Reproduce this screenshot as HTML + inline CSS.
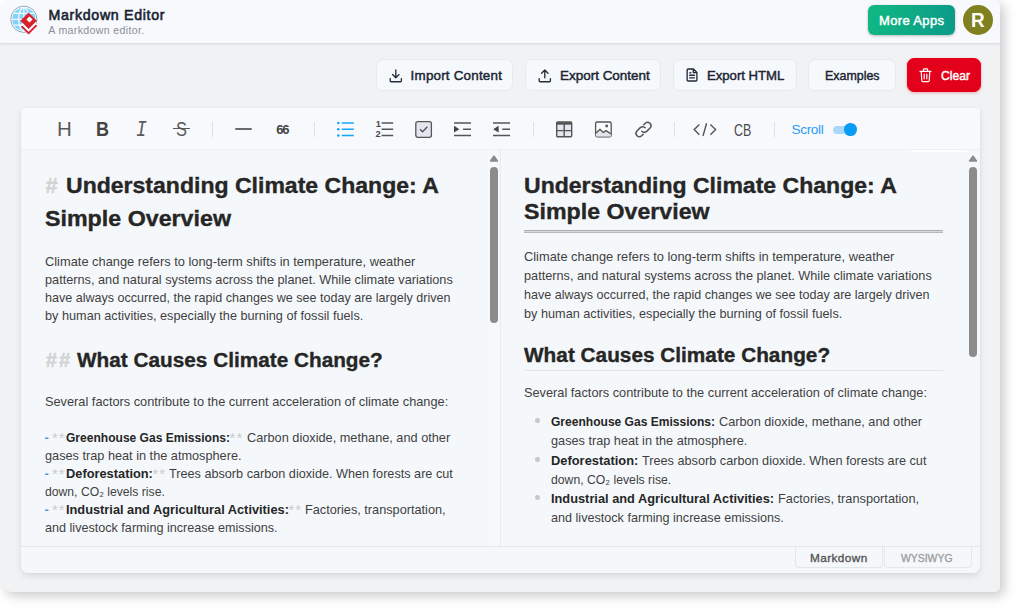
<!DOCTYPE html>
<html><head><meta charset="utf-8"><title>Markdown Editor</title>
<style>
*{box-sizing:border-box;margin:0;padding:0}
html,body{width:1024px;height:615px;overflow:hidden;background:#fff;font-family:"Liberation Sans",sans-serif;color:#222}
#win{position:absolute;left:0;top:0;width:1000.2px;height:592.2px;background:#f1f2f4;border-radius:13px 6px 5px 13px;box-shadow:4px 4px 12px rgba(0,0,0,.21);overflow:hidden}
#hdr{position:absolute;left:0;top:0;width:100%;height:43.6px;background:#f7f9fc;border-bottom:1px solid #dde0e5;box-shadow:0 1px 2px rgba(0,0,0,.06)}
.t{position:absolute;white-space:nowrap;font-family:"Liberation Sans",sans-serif}
.btn{position:absolute;top:58.9px;height:32.3px;background:#f6f9fc;border:1px solid #e7eaee;border-radius:7px}
#card{position:absolute;left:21px;top:107.5px;width:959px;height:465px;background:#f5f8fb;border-radius:3px 3px 7px 7px;box-shadow:0 0 1.5px rgba(0,0,0,.08),0 3px 6px rgba(0,0,0,.10);overflow:hidden}
#tb{position:absolute;left:0;top:0;width:100%;height:42px;background:#f7f9fc;border-bottom:1px solid #eceff3}
#foot{position:absolute;left:0;top:438px;width:100%;height:27px;background:#f5f8fb;border-top:1px solid #e4e7eb}
.dv{position:absolute;top:122px;width:1px;height:15px;background:#dde0e5}
.sb{position:absolute;width:8px;background:#8b8b8b;border-radius:4px}
.tri{position:absolute;width:0;height:0;border-left:4.5px solid transparent;border-right:4.5px solid transparent;border-bottom:6.5px solid #8b8b8b}
svg{position:absolute;overflow:visible}
.tab{position:absolute;top:546px;height:22px;border:1px solid #e3e6ea;border-top:none;border-radius:0 0 4px 4px}
</style></head><body>
<div id="win">
 <div id="hdr"></div>
 <div class="btn" style="left:376.4px;width:137px"></div>
 <div class="btn" style="left:525px;width:136.4px"></div>
 <div class="btn" style="left:672.8px;width:124px"></div>
 <div class="btn" style="left:807.8px;width:88px"></div>
 <div class="btn" style="left:906.6px;width:74.3px;top:58.4px;height:33.5px;background:#e3001b;border-color:#e3001b;box-shadow:0 1px 3px rgba(200,0,20,.3)"></div>
 <div style="position:absolute;left:867.5px;top:5.3px;width:87.5px;height:29.6px;border-radius:6px;background:linear-gradient(100deg,#10b981,#0b9a8a);box-shadow:0 1px 3px rgba(0,0,0,.25)"></div>
 <div style="position:absolute;left:962.5px;top:5.3px;width:30px;height:30px;border-radius:50%;background:#80801f"></div>
 <div id="card">
  <div id="tb"></div>
  <div style="position:absolute;left:467px;top:42px;width:13.4px;height:396px;background:#f6f9fc;border-right:1px solid #e7eaee"></div>
  <div id="foot"></div>
 </div>
 <!-- scrollbars -->
 <svg style="left:488px;top:153px" width="12" height="10" viewBox="0 0 12 10"><path d="M2.6 8l3.4-4.8L9.4 8z" fill="#8b8b8b" stroke="#8b8b8b" stroke-width="1.6" stroke-linejoin="round"/></svg>
 <div class="sb" style="left:489.8px;top:167px;height:155.5px"></div>
 <svg style="left:967.4px;top:153px" width="12" height="10" viewBox="0 0 12 10"><path d="M2.6 8l3.4-4.8L9.4 8z" fill="#8b8b8b" stroke="#8b8b8b" stroke-width="1.6" stroke-linejoin="round"/></svg>
 <div class="sb" style="left:969.2px;top:167px;height:190px"></div>
 <div style="position:absolute;left:911px;top:150px;width:56px;height:1.5px;background:#fdfeff"></div>
 <!-- toolbar dividers -->
 <div class="dv" style="left:212px"></div><div class="dv" style="left:314px"></div><div class="dv" style="left:532.5px"></div><div class="dv" style="left:673.5px"></div><div class="dv" style="left:774.3px"></div>
 <!-- right pane rules -->
 <div style="position:absolute;left:524px;top:229.6px;width:419px;height:3.2px;background:#dadada;border-top:1.1px solid #adadad;border-bottom:1.1px solid #b8b8b8"></div>
 <div style="position:absolute;left:524px;top:370px;width:419px;height:1px;background:#e3e5e8"></div>
 <!-- bullets -->
 <div style="position:absolute;left:535.4px;top:418.3px;width:4.4px;height:4.4px;border-radius:50%;background:#c8c8c8"></div>
 <div style="position:absolute;left:535.4px;top:457.2px;width:4.4px;height:4.4px;border-radius:50%;background:#c8c8c8"></div>
 <div style="position:absolute;left:535.4px;top:495.4px;width:4.4px;height:4.4px;border-radius:50%;background:#c8c8c8"></div>
 <!-- tabs -->
 <div class="tab" style="left:794.5px;width:88.5px"></div>
 <div class="tab" style="left:883.5px;width:88px;border-color:#e6e9ec"></div>
 <!-- toggle -->
 <div style="position:absolute;left:833.4px;top:125.8px;width:22px;height:8px;border-radius:4px;background:#a9d9f9"></div>
 <div style="position:absolute;left:844.3px;top:123.2px;width:12.8px;height:12.8px;border-radius:50%;background:#0a9cf5"></div>
 <!-- logo -->
 <svg style="left:8px;top:3px" width="32" height="34" viewBox="8 3 32 34">
  <circle cx="23.85" cy="19.25" r="13.1" fill="#fdfeff" stroke="#7f9db4" stroke-width="0.9"/>
  <circle cx="23.85" cy="19.25" r="11.6" fill="#84d1fa"/>
  <g fill="none" stroke="#f1faff" stroke-width="1.25">
   <ellipse cx="23.85" cy="19.25" rx="5.2" ry="11.6"/>
   <path d="M23.85 7.6v23.3M12.2 19.25h23.3M14 13.3h19.7M14 25.2h19.7"/>
  </g>
  <path d="M28.6 12.6l8.2 8.2-8.2 8.2-8.2-8.2z" fill="#d8222b"/>
  <path d="M29.5 16.4l3.1 3.1-3.1 3.1-3.1-3.1z" fill="#fff"/>
  <path d="M21.2 24.2l7.4 7.4 8-8" fill="none" stroke="#fff" stroke-width="3.2"/>
  <path d="M21.6 26.2l7 7 8-8" fill="none" stroke="#d8222b" stroke-width="1.9"/>
 </svg>
 <!-- import (download) -->
 <svg style="left:389px;top:69px" width="14" height="14" viewBox="0 0 14 14" fill="none" stroke="#252d3a" stroke-width="1.35" stroke-linecap="round" stroke-linejoin="round">
  <path d="M6.8 1v7.6M3.6 5.6l3.2 3.2 3.2-3.2M1.2 9.6v2.2a.9.9 0 0 0 .9.9h9.4a.9.9 0 0 0 .9-.9V9.6"/>
 </svg>
 <!-- export (upload) -->
 <svg style="left:537.6px;top:69px" width="14" height="14" viewBox="0 0 14 14" fill="none" stroke="#252d3a" stroke-width="1.35" stroke-linecap="round" stroke-linejoin="round">
  <path d="M6.8 8.8V1.2M3.6 4.2l3.2-3.2 3.2 3.2M1.2 9.6v2.2a.9.9 0 0 0 .9.9h9.4a.9.9 0 0 0 .9-.9V9.6"/>
 </svg>
 <!-- file -->
 <svg style="left:686.2px;top:67.7px" width="13.4" height="14.4" viewBox="0 0 14 15" fill="none" stroke="#1f2937" stroke-width="1.4" stroke-linecap="round" stroke-linejoin="round">
  <path d="M2.2 1h5.6l3.6 3.6v8a1 1 0 0 1-1 1H2.2a1 1 0 0 1-1-1V2a1 1 0 0 1 1-1zM7.6 1v3.8h3.8M3.8 7.6h5M3.8 10.3h5M3.8 5h1.4"/>
 </svg>
 <!-- trash -->
 <svg style="left:919px;top:68.4px" width="14" height="15" viewBox="0 0 14 15" fill="none" stroke="#fff" stroke-width="1.2" stroke-linecap="round" stroke-linejoin="round">
  <path d="M1 3.4h11M4.4 3.2V1.6a.7.7 0 0 1 .7-.7h2.8a.7.7 0 0 1 .7.7v1.6M2.2 3.6l.6 9.2a1 1 0 0 0 1 .9h5.4a1 1 0 0 0 1-.9l.6-9.2M5.2 6.2v4.6M7.8 6.2v4.6"/>
 </svg>
 <!-- hr -->
 <div style="position:absolute;left:235.4px;top:127.9px;width:16.8px;height:2px;background:#6a6a6a;border-radius:1px"></div>
 <!-- strike line -->
 <div style="position:absolute;left:173.2px;top:128.1px;width:16.6px;height:1.4px;background:#5a5a5a"></div>
 <!-- ul -->
 <svg style="left:336px;top:120px" width="20" height="18" viewBox="0 0 20 18">
  <g fill="#13a5fb"><circle cx="2.3" cy="3" r="1.3"/><circle cx="2.3" cy="9.2" r="1.3"/><circle cx="2.3" cy="15.5" r="1.3"/></g>
  <path d="M5.8 3h12M5.8 9.2h12M5.8 15.5h12" stroke="#13a5fb" stroke-width="1.4"/>
 </svg>
 <!-- ol lines -->
 <svg style="left:375px;top:120px" width="20" height="18" viewBox="0 0 20 18">
  <path d="M6.6 3h11.6M6.6 9.2h11.6M6.6 15.5h11.6" stroke="#555" stroke-width="1.4"/>
 </svg>
 <!-- task -->
 <svg style="left:414px;top:120px" width="20" height="18" viewBox="0 0 20 18" fill="none" stroke="#555" stroke-width="1.3">
  <rect x="1.8" y="1.6" width="15.6" height="15.7" rx="2" fill="#e3e6ee"/>
  <path d="M6 9.2l2.6 2.6 4.8-5" stroke-width="1.4"/>
 </svg>
 <!-- indent -->
 <svg style="left:453px;top:120px" width="20" height="18" viewBox="0 0 20 18">
  <path d="M1 3h17M10 9.2h8M1 15.5h17" stroke="#555" stroke-width="1.4"/>
  <path d="M1 5.8v6.8l5.4-3.4z" fill="#444"/>
 </svg>
 <!-- outdent -->
 <svg style="left:492px;top:120px" width="20" height="18" viewBox="0 0 20 18">
  <path d="M1 3h17M10.2 9.2h7.8M1 15.5h17" stroke="#555" stroke-width="1.4"/>
  <path d="M6.6 5.8v6.8L1.2 9.2z" fill="#444"/>
 </svg>
 <!-- table -->
 <svg style="left:555px;top:120px" width="20" height="18" viewBox="0 0 20 18" fill="none" stroke="#555" stroke-width="1.4">
  <rect x="1.7" y="2" width="15" height="14.8" rx="1" fill="#e4e7ef"/>
  <path d="M1.7 3.4h15" stroke-width="2.6"/>
  <path d="M1.7 10.6h15M9.2 4v12.8"/>
 </svg>
 <!-- image -->
 <svg style="left:594px;top:120px" width="20" height="18" viewBox="0 0 20 18" fill="none" stroke="#555" stroke-width="1.3" stroke-linejoin="round">
  <rect x="1.6" y="2" width="15.6" height="14.8" rx="1.6" fill="#f8fafc"/>
  <path d="M1.8 13.2l4.2-4 3.4 3.4 2.6-2 5 3.4v2.6h-15.2z" fill="#e1e4eb" stroke="none"/><path d="M1.8 13.2l4.2-4 3.4 3.4 2.6-2 5 3.4"/>
  <circle cx="12.7" cy="6" r="1.4" fill="#555" stroke="none"/>
 </svg>
 <!-- link -->
 <svg style="left:634px;top:120px" width="20" height="19" viewBox="0 0 20 19" fill="none" stroke="#555" stroke-width="1.5" stroke-linecap="round">
  <path d="M7.8 11.2a3.4 3.4 0 0 0 4.9.2l3.4-3.4a3.4 3.4 0 0 0-4.8-4.8l-1.6 1.6"/>
  <path d="M11.2 7.8a3.4 3.4 0 0 0-4.9-.2l-3.4 3.4a3.4 3.4 0 0 0 4.8 4.8l1.6-1.6"/>
 </svg>
 <!-- code -->
 <svg style="left:692px;top:120px" width="26" height="18" viewBox="0 0 26 18" fill="none" stroke="#555" stroke-width="1.4" stroke-linejoin="miter">
  <path d="M7.4 4.4L2.2 9.6l5.2 5.2M18.4 4.4l5.2 5.2-5.2 5.2M14.6 3.2l-3.6 12.8"/>
 </svg>

</div>
<span class="t" style="left:48.5px;top:5px;font-size:14.2px;line-height:20px;color:#1b2433;letter-spacing:0.682px;-webkit-text-stroke:0.6px;">Markdown Editor</span>
<span class="t" style="left:48.3px;top:22px;font-size:10.6px;line-height:16px;color:#8b9099;letter-spacing:0.347px;">A markdown editor.</span>
<span class="t" style="left:879.0px;top:11px;font-size:13px;line-height:19px;color:#fff;letter-spacing:0.355px;-webkit-text-stroke:0.45px;">More Apps</span>
<span class="t" style="left:971.3px;top:6px;font-size:21px;line-height:27px;color:#fff;font-weight:700;transform-origin:0 50%;transform:scaleX(.9);">R</span>
<span class="t" style="left:410.6px;top:66px;font-size:13.4px;line-height:19px;color:#1b2433;letter-spacing:0.209px;-webkit-text-stroke:0.45px;">Import Content</span>
<span class="t" style="left:559.8px;top:66px;font-size:13.4px;line-height:19px;color:#1b2433;transform-origin:0 0;transform:scaleX(1.0053);-webkit-text-stroke:0.45px;">Export Content</span>
<span class="t" style="left:706.9px;top:66px;font-size:13.4px;line-height:19px;color:#1b2433;transform-origin:0 0;transform:scaleX(0.9800);-webkit-text-stroke:0.45px;">Export HTML</span>
<span class="t" style="left:825.0px;top:66px;font-size:13.4px;line-height:19px;color:#1b2433;transform-origin:0 0;transform:scaleX(0.9269);-webkit-text-stroke:0.45px;">Examples</span>
<span class="t" style="left:940.5px;top:66px;font-size:13.4px;line-height:19px;color:#fff;transform-origin:0 0;transform:scaleX(0.9062);-webkit-text-stroke:0.45px;">Clear</span>
<span class="t" style="left:791.5px;top:120px;font-size:13.6px;line-height:19px;color:#2a9df4;letter-spacing:-0.340px;">Scroll</span>
<span class="t" style="left:734.4px;top:120px;font-size:16px;line-height:21px;color:#4a4a4a;transform-origin:0 50%;transform:scaleX(.78);">CB</span>
<span class="t" style="left:57.0px;top:115px;font-size:20.5px;line-height:27px;color:#5a5a5a;transform-origin:0 50%;transform:scaleX(1.0);">H</span>
<span class="t" style="left:96.4px;top:115px;font-size:20.5px;line-height:27px;color:#444;font-weight:700;transform-origin:0 50%;transform:scaleX(.88);">B</span>
<span class="t" style="left:135.6px;top:115px;font-size:22.5px;line-height:30px;color:#5a5a5a;font-family:'Liberation Mono',monospace;font-style:italic;transform-origin:0 50%;transform:scaleX(.8);">I</span>
<span class="t" style="left:176.4px;top:115px;font-size:20.5px;line-height:27px;color:#5a5a5a;transform-origin:0 50%;transform:scaleX(.8);">S</span>
<span class="t" style="left:276.2px;top:120px;font-size:13px;line-height:19px;color:#444;font-weight:700;letter-spacing:-1.069px;">66</span>
<span class="t" style="left:375.8px;top:117px;font-size:9.3px;line-height:14px;color:#4a4a4a;font-weight:700;">1</span>
<span class="t" style="left:375.4px;top:127px;font-size:9.3px;line-height:14px;color:#4a4a4a;font-weight:700;">2</span>
<span class="t" style="left:810.0px;top:549px;font-size:11.8px;line-height:18px;color:#555;letter-spacing:0.397px;-webkit-text-stroke:0.35px;">Markdown</span>
<span class="t" style="left:901.4px;top:550px;font-size:11px;line-height:16px;color:#9d9d9d;transform-origin:0 0;transform:scaleX(0.9469);-webkit-text-stroke:0.35px;">WYSIWYG</span>
<span class="t" style="left:45.5px;top:171px;font-size:21.8px;line-height:29px;color:#d2d2d2;font-weight:700;-webkit-text-stroke:0.4px;">#</span>
<span class="t" style="left:65.9px;top:171px;font-size:21.8px;line-height:29px;color:#262626;font-weight:700;transform-origin:0 0;transform:scaleX(1.0569);-webkit-text-stroke:0.35px;">Understanding Climate Change: A</span>
<span class="t" style="left:44.8px;top:204px;font-size:21.8px;line-height:29px;color:#262626;font-weight:700;transform-origin:0 0;transform:scaleX(1.0661);-webkit-text-stroke:0.35px;">Simple Overview</span>
<span class="t" style="left:44.8px;top:253px;font-size:12.1px;line-height:18px;color:#3f3f3f;transform-origin:0 0;transform:scaleX(1.0615);">Climate change refers to long-term shifts in temperature, weather</span>
<span class="t" style="left:44.8px;top:271px;font-size:12.1px;line-height:18px;color:#3f3f3f;transform-origin:0 0;transform:scaleX(1.0514);">patterns, and natural systems across the planet. While climate variations</span>
<span class="t" style="left:44.8px;top:289px;font-size:12.1px;line-height:18px;color:#3f3f3f;transform-origin:0 0;transform:scaleX(1.0382);">have always occurred, the rapid changes we see today are largely driven</span>
<span class="t" style="left:44.8px;top:307px;font-size:12.1px;line-height:18px;color:#3f3f3f;transform-origin:0 0;transform:scaleX(1.0499);">by human activities, especially the burning of fossil fuels.</span>
<span class="t" style="left:45.7px;top:347px;font-size:20.3px;line-height:26px;color:#d2d2d2;font-weight:700;letter-spacing:2.137px;-webkit-text-stroke:0.4px;">##</span>
<span class="t" style="left:76.8px;top:347px;font-size:20.3px;line-height:26px;color:#262626;font-weight:700;transform-origin:0 0;transform:scaleX(1.0239);-webkit-text-stroke:0.35px;">What Causes Climate Change?</span>
<span class="t" style="left:44.6px;top:393px;font-size:12.1px;line-height:18px;color:#3f3f3f;transform-origin:0 0;transform:scaleX(1.0560);">Several factors contribute to the current acceleration of climate change:</span>
<span class="t" style="left:44.5px;top:428px;font-size:13px;line-height:19px;color:#4b96e6;font-weight:700;">-</span>
<span class="t" style="left:52.1px;top:427px;font-size:15px;line-height:21px;color:#cbcbcb;letter-spacing:0.713px;">**</span>
<span class="t" style="left:65.5px;top:429px;font-size:12.1px;line-height:18px;color:#262626;font-weight:700;transform-origin:0 0;transform:scaleX(0.9959);">Greenhouse Gas Emissions:</span>
<span class="t" style="left:229.5px;top:427px;font-size:15px;line-height:21px;color:#cbcbcb;letter-spacing:1.113px;">**</span>
<span class="t" style="left:246.5px;top:429px;font-size:12.1px;line-height:18px;color:#3f3f3f;transform-origin:0 0;transform:scaleX(1.0530);">Carbon dioxide, methane, and other</span>
<span class="t" style="left:44.8px;top:447px;font-size:12.1px;line-height:18px;color:#3f3f3f;transform-origin:0 0;transform:scaleX(1.0513);">gases trap heat in the atmosphere.</span>
<span class="t" style="left:44.5px;top:464px;font-size:13px;line-height:19px;color:#4b96e6;font-weight:700;">-</span>
<span class="t" style="left:52.1px;top:463px;font-size:15px;line-height:21px;color:#cbcbcb;letter-spacing:0.713px;">**</span>
<span class="t" style="left:65.5px;top:465px;font-size:12.1px;line-height:18px;color:#262626;font-weight:700;transform-origin:0 0;transform:scaleX(1.0600);">Deforestation:</span>
<span class="t" style="left:152.4px;top:463px;font-size:15px;line-height:21px;color:#cbcbcb;letter-spacing:0.912px;">**</span>
<span class="t" style="left:169.2px;top:465px;font-size:12.1px;line-height:18px;color:#3f3f3f;transform-origin:0 0;transform:scaleX(1.0467);">Trees absorb carbon dioxide. When forests are cut</span>
<span class="t" style="left:44.8px;top:483px;font-size:12.1px;line-height:18px;color:#3f3f3f;transform-origin:0 0;transform:scaleX(1.0070);">down, CO₂ levels rise.</span>
<span class="t" style="left:44.5px;top:500px;font-size:13px;line-height:19px;color:#4b96e6;font-weight:700;">-</span>
<span class="t" style="left:52.1px;top:499px;font-size:15px;line-height:21px;color:#cbcbcb;letter-spacing:0.713px;">**</span>
<span class="t" style="left:65.5px;top:501px;font-size:12.1px;line-height:18px;color:#262626;font-weight:700;transform-origin:0 0;transform:scaleX(1.0575);">Industrial and Agricultural Activities:</span>
<span class="t" style="left:288.4px;top:499px;font-size:15px;line-height:21px;color:#cbcbcb;letter-spacing:1.013px;">**</span>
<span class="t" style="left:305.3px;top:501px;font-size:12.1px;line-height:18px;color:#3f3f3f;transform-origin:0 0;transform:scaleX(1.0511);">Factories, transportation,</span>
<span class="t" style="left:44.8px;top:519px;font-size:12.1px;line-height:18px;color:#3f3f3f;transform-origin:0 0;transform:scaleX(1.0423);">and livestock farming increase emissions.</span>
<span class="t" style="left:524.4px;top:171px;font-size:21.8px;line-height:29px;color:#262626;font-weight:700;transform-origin:0 0;transform:scaleX(1.0569);-webkit-text-stroke:0.35px;">Understanding Climate Change: A</span>
<span class="t" style="left:524.4px;top:197px;font-size:21.8px;line-height:29px;color:#262626;font-weight:700;transform-origin:0 0;transform:scaleX(1.0638);-webkit-text-stroke:0.35px;">Simple Overview</span>
<span class="t" style="left:524.4px;top:248px;font-size:12.1px;line-height:18px;color:#3f3f3f;transform-origin:0 0;transform:scaleX(1.0615);">Climate change refers to long-term shifts in temperature, weather</span>
<span class="t" style="left:524.4px;top:267px;font-size:12.1px;line-height:18px;color:#3f3f3f;transform-origin:0 0;transform:scaleX(1.0514);">patterns, and natural systems across the planet. While climate variations</span>
<span class="t" style="left:524.4px;top:286px;font-size:12.1px;line-height:18px;color:#3f3f3f;transform-origin:0 0;transform:scaleX(1.0382);">have always occurred, the rapid changes we see today are largely driven</span>
<span class="t" style="left:524.4px;top:305px;font-size:12.1px;line-height:18px;color:#3f3f3f;transform-origin:0 0;transform:scaleX(1.0499);">by human activities, especially the burning of fossil fuels.</span>
<span class="t" style="left:523.8px;top:342px;font-size:20.3px;line-height:26px;color:#262626;font-weight:700;transform-origin:0 0;transform:scaleX(1.0249);-webkit-text-stroke:0.35px;">What Causes Climate Change?</span>
<span class="t" style="left:524.4px;top:384px;font-size:12.1px;line-height:18px;color:#3f3f3f;transform-origin:0 0;transform:scaleX(1.0554);">Several factors contribute to the current acceleration of climate change:</span>
<span class="t" style="left:551.0px;top:413px;font-size:12.1px;line-height:18px;color:#262626;font-weight:700;transform-origin:0 0;transform:scaleX(0.9959);">Greenhouse Gas Emissions:</span>
<span class="t" style="left:719.2px;top:413px;font-size:12.1px;line-height:18px;color:#3f3f3f;transform-origin:0 0;transform:scaleX(1.0525);">Carbon dioxide, methane, and other</span>
<span class="t" style="left:551.0px;top:432px;font-size:12.1px;line-height:18px;color:#3f3f3f;transform-origin:0 0;transform:scaleX(1.0503);">gases trap heat in the atmosphere.</span>
<span class="t" style="left:551.0px;top:452px;font-size:12.1px;line-height:18px;color:#262626;font-weight:700;transform-origin:0 0;transform:scaleX(1.0648);">Deforestation:</span>
<span class="t" style="left:641.9px;top:452px;font-size:12.1px;line-height:18px;color:#3f3f3f;transform-origin:0 0;transform:scaleX(1.0490);">Trees absorb carbon dioxide. When forests are cut</span>
<span class="t" style="left:551.0px;top:471px;font-size:12.1px;line-height:18px;color:#3f3f3f;transform-origin:0 0;transform:scaleX(1.0103);">down, CO₂ levels rise.</span>
<span class="t" style="left:551.0px;top:490px;font-size:12.1px;line-height:18px;color:#262626;font-weight:700;transform-origin:0 0;transform:scaleX(1.0580);">Industrial and Agricultural Activities:</span>
<span class="t" style="left:777.5px;top:490px;font-size:12.1px;line-height:18px;color:#3f3f3f;transform-origin:0 0;transform:scaleX(1.0548);">Factories, transportation,</span>
<span class="t" style="left:551.0px;top:509px;font-size:12.1px;line-height:18px;color:#3f3f3f;transform-origin:0 0;transform:scaleX(1.0432);">and livestock farming increase emissions.</span>
</body></html>
